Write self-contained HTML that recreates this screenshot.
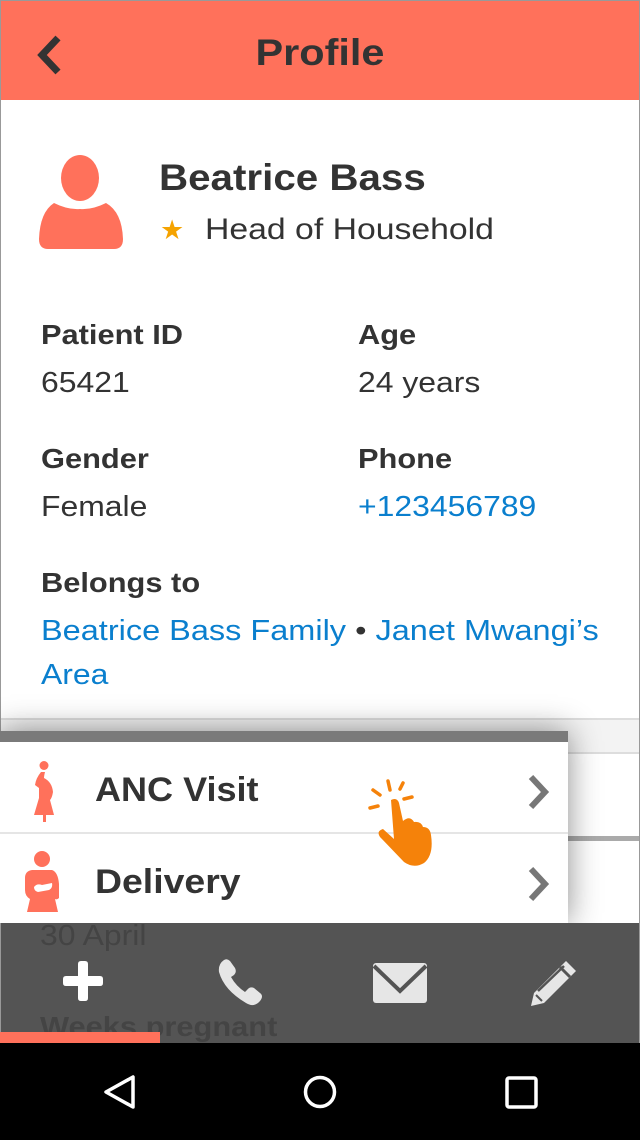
<!DOCTYPE html>
<html><head><meta charset="utf-8"><style>
*{margin:0;padding:0;box-sizing:border-box}
body{width:640px;height:1140px;overflow:hidden;font-family:"Liberation Sans","DejaVu Sans",sans-serif;background:#fff;position:relative;color:#333}
.abs{position:absolute;transform-origin:left center;white-space:nowrap}
.sx{transform:scaleX(1.1)}
.hdr{left:0;top:0;width:640px;height:100px;background:#ff715b;border:1px solid #999;border-bottom:none}
.lbl{font-weight:bold;font-size:28px;color:#333}
.val{font-size:29px;color:#333}
.link{color:#0a7fce}
</style></head><body>
<div class="abs hdr"></div>
<svg class="abs" style="left:34px;top:34px" width="30" height="42"><path d="M24 4 L8 21 L24 38" stroke="#333" stroke-width="7" fill="none"/></svg>
<div class="abs" style="left:0;width:640px;top:32px;text-align:center;font-weight:bold;font-size:37px;color:#333;transform:scaleX(1.12);transform-origin:center">Profile</div>
<div class="abs" style="left:0;top:100px;width:1px;height:943px;background:#999"></div>
<div class="abs" style="right:0;top:100px;width:1px;height:943px;background:#999"></div>
<svg class="abs" style="left:38px;top:154px" width="86" height="96"><ellipse cx="42" cy="24" rx="19" ry="23" fill="#ff715b"/><path d="M16 49 Q30 56 42 55 Q54 56 68 49 Q84 58 85 85 Q85 95 76 95 L10 95 Q1 95 1 85 Q2 58 16 49Z" fill="#ff715b"/></svg>
<div class="abs sx" style="left:159px;top:157px;font-weight:bold;font-size:37px;transform:scaleX(1.09)">Beatrice Bass</div>
<div class="abs" style="left:160px;top:215px;font-size:27px;color:#f5a300">★</div>
<div class="abs" style="left:205px;top:213px;font-size:30px;transform:scaleX(1.125)">Head of Household</div>
<div class="abs lbl sx" style="left:41px;top:319px">Patient ID</div>
<div class="abs val sx" style="left:41px;top:367px">65421</div>
<div class="abs lbl sx" style="left:358px;top:319px">Age</div>
<div class="abs val sx" style="left:358px;top:367px">24 years</div>
<div class="abs lbl sx" style="left:41px;top:443px">Gender</div>
<div class="abs val sx" style="left:41px;top:491px">Female</div>
<div class="abs lbl sx" style="left:358px;top:443px">Phone</div>
<div class="abs val link sx" style="left:358px;top:491px">+123456789</div>
<div class="abs lbl sx" style="left:41px;top:567px">Belongs to</div>
<div class="abs val" style="left:41px;top:615px;transform:scaleX(1.12)"><span class="link">Beatrice Bass Family</span> • <span class="link">Janet Mwangi’s</span></div>
<div class="abs val link sx" style="left:41px;top:659px">Area</div>
<!-- background area under popup -->
<div class="abs" style="left:1px;top:718px;width:638px;height:2px;background:#ddd"></div>
<div class="abs" style="left:1px;top:720px;width:638px;height:32px;background:#f3f3f3"></div>
<div class="abs" style="left:1px;top:752px;width:638px;height:2px;background:#ddd"></div>
<div class="abs" style="left:568px;top:836px;width:71px;height:5px;background:#aaa"></div>
<!-- popup -->
<div class="abs" style="left:0;top:731px;width:568px;height:192px;background:#fff;box-shadow:0 0 30px rgba(0,0,0,.45)"></div>
<div class="abs" style="left:0;top:731px;width:568px;height:11px;background:#7a7a7a"></div>
<div class="abs" style="left:0;top:832px;width:568px;height:2px;background:#e5e5e5"></div>
<svg class="abs" style="left:28px;top:760px" width="30" height="62"><circle cx="16" cy="5.5" r="4.5" fill="#ff715b"/><path d="M13 12 L17 12 Q16 16 16 18 Q24 22 25 32 Q24 38 22 40 L26 55 L18 55 L18 62 L15 62 L15 55 L6 55 L11 38 L11 28 L7 25 Q8 18 13 12 Z" fill="#ff715b"/></svg>
<div class="abs" style="left:95px;top:771px;font-weight:bold;font-size:34px;transform:scaleX(1.06)">ANC Visit</div>
<svg class="abs" style="left:24px;top:850px" width="40" height="62"><circle cx="18" cy="9" r="8" fill="#ff715b"/><path d="M8 20 L28 20 Q34 22 35 34 L35 48 Q33 50 31 49 L34 62 L3 62 L6 49 Q1 46 1 40 L1 28 Q1 21 8 20Z" fill="#ff715b"/><path d="M10 37 Q13 33 18 35 L28 33 Q29 38 25 40 L14 42 Q10 41 10 37Z" fill="#fff"/></svg>
<div class="abs" style="left:95px;top:863px;font-weight:bold;font-size:34px;transform:scaleX(1.1)">Delivery</div>
<svg class="abs" style="left:526px;top:774px" width="26" height="36"><path d="M5 3 L19 18 L5 33" stroke="#777" stroke-width="6" fill="none"/></svg>
<svg class="abs" style="left:526px;top:866px" width="26" height="36"><path d="M5 3 L19 18 L5 33" stroke="#777" stroke-width="6" fill="none"/></svg>
<svg class="abs" style="left:366px;top:779px" width="80" height="90" viewBox="0 0 80 90"><g stroke="#f5820a" stroke-width="3.5" stroke-linecap="round"><line x1="22" y1="2" x2="24" y2="11"/><line x1="37" y1="4" x2="34" y2="10"/><line x1="7" y1="11" x2="14" y2="16"/><line x1="4" y1="29" x2="12" y2="27"/><line x1="38" y1="20" x2="46" y2="18"/></g><path d="M25 21 Q31 18 33 24 L37 42 Q44 36 48 43 Q55 42 57 48 Q64 48 65 56 Q68 76 58 84 Q48 90 38 83 L14 58 Q10 52 17 50 L28 60 Z" fill="#f5820a"/></svg>
<!-- bottom bar -->
<div class="abs" style="left:0;top:923px;width:640px;height:120px;background:#545454;border-left:1px solid #999;border-right:1px solid #999"></div>
<div class="abs sx" style="left:40px;top:920px;font-size:29px;color:#444">30 April</div>
<div class="abs sx" style="left:40px;top:1011px;font-weight:bold;font-size:28px;color:#444;height:32px;overflow:hidden">Weeks pregnant</div>
<svg class="abs" style="left:62px;top:961px" width="46" height="46"><path d="M16 3 Q16 0 19 0 L23 0 Q26 0 26 3 L26 15 L38 15 Q41 15 41 18 L41 22 Q41 25 38 25 L26 25 L26 37 Q26 40 23 40 L19 40 Q16 40 16 37 L16 25 L4 25 Q1 25 1 22 L1 18 Q1 15 4 15 L16 15Z" fill="#fff"/></svg>
<svg class="abs" style="left:216px;top:958px" width="54" height="50"><path d="M8 2 Q2 6 3 14 Q8 32 30 45 Q38 50 44 43 Q48 38 44 35 L38 30 Q34 28 31 32 L29 34 Q20 28 15 19 L18 17 Q21 14 19 10 L14 3 Q11 0 8 2Z" fill="#e6e6e6"/></svg>
<svg class="abs" style="left:372px;top:963px" width="56" height="40"><rect x="1" y="0" width="54" height="40" rx="3" fill="#e6e6e6"/><path d="M2 3 L28 28 L54 3" stroke="#545454" stroke-width="4" fill="none"/></svg>
<svg class="abs" style="left:526px;top:958px" width="52" height="52"><path d="M40 3 L50 13 L18 45 L5 48 L8 35 Z" fill="#e6e6e6"/><path d="M34 9 L44 19" stroke="#545454" stroke-width="3"/><path d="M10 37 L16 43" stroke="#545454" stroke-width="2"/><path d="M12 33 L38 8" stroke="#545454" stroke-width="2.5"/></svg>
<div class="abs" style="left:0;top:1032px;width:160px;height:11px;background:#ff715b"></div>
<!-- android nav -->
<div class="abs" style="left:0;top:1043px;width:640px;height:97px;background:#000"></div>
<svg class="abs" style="left:100px;top:1073px" width="40" height="40"><path d="M33 4 L33 34 L6 19 Z" stroke="#fff" stroke-width="3.5" fill="none" stroke-linejoin="round"/></svg>
<svg class="abs" style="left:300px;top:1072px" width="40" height="40"><circle cx="20" cy="20" r="14.5" stroke="#fff" stroke-width="3.5" fill="none"/></svg>
<svg class="abs" style="left:503px;top:1074px" width="40" height="40"><rect x="4" y="4" width="29" height="29" rx="2" stroke="#fff" stroke-width="3.5" fill="none"/></svg>
</body></html>
